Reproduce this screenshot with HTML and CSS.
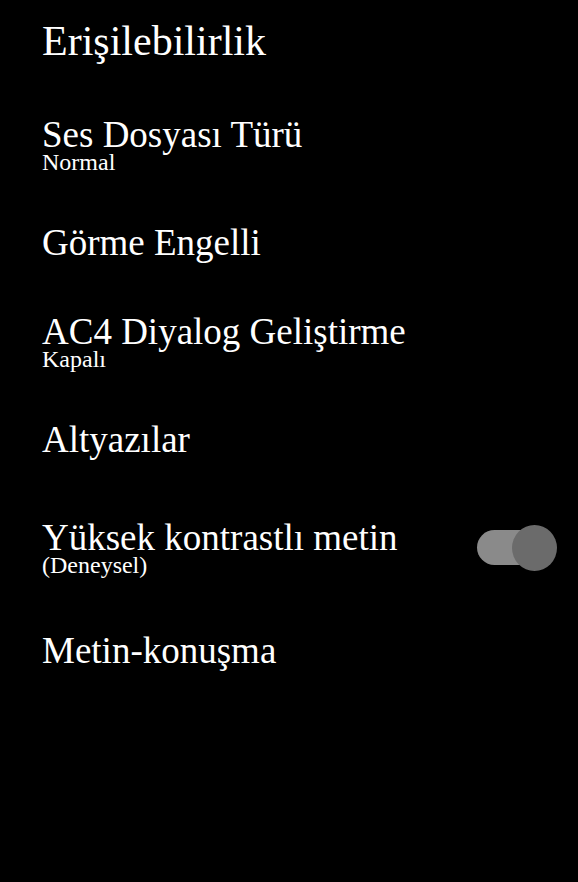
FILE: index.html
```html
<!DOCTYPE html>
<html lang="tr">
<head>
<meta charset="utf-8">
<link rel="stylesheet" href="styles.css">
</head>
<body>
<div class="screen">
  <h1 class="title">Erişilebilirlik</h1>
  <ul class="list">
    <li class="item">
      <div class="text"><div class="name">Ses Dosyası Türü</div><div class="sub">Normal</div></div>
    </li>
    <li class="item">
      <div class="text"><div class="name">Görme Engelli</div></div>
    </li>
    <li class="item">
      <div class="text"><div class="name">AC4 Diyalog Geliştirme</div><div class="sub">Kapalı</div></div>
    </li>
    <li class="item">
      <div class="text"><div class="name">Altyazılar</div></div>
    </li>
    <li class="item item--switch">
      <div class="text"><div class="name">Yüksek kontrastlı metin</div><div class="sub">(Deneysel)</div></div>
      <div class="toggle"><span class="track"></span><span class="knob"></span></div>
    </li>
    <li class="item">
      <div class="text"><div class="name">Metin-konuşma</div></div>
    </li>
  </ul>
</div>
</body>
</html>
```
FILE: styles.css
```css
html, body {
  margin: 0;
  padding: 0;
  background: #000;
}
body {
  font-family: "Liberation Serif", "Times New Roman", serif;
  color: #fff;
  width: 578px;
  height: 882px;
  overflow: hidden;
}
.screen {
  padding: 17px 21px 0 42px;
}
.title {
  margin: 0;
  font-size: 42px;
  font-weight: normal;
  line-height: 48px;
}
.list {
  list-style: none;
  margin: 52px 0 0;
  padding: 0;
  display: flex;
  flex-direction: column;
  gap: 53px;
}
.item {
  display: flex;
  align-items: center;
  justify-content: space-between;
}
.item--switch {
  padding: 9px 0 5px;
}
.name {
  font-size: 37px;
  line-height: 36px;
}
.sub {
  font-size: 24px;
  line-height: 19px;
}
.toggle {
  position: relative;
  width: 80px;
  height: 46px;
  flex: none;
}
.track {
  position: absolute;
  left: 0;
  top: 5px;
  width: 64px;
  height: 35px;
  border-radius: 18px;
  background: #8a8a8a;
}
.knob {
  position: absolute;
  right: 0;
  top: 0;
  width: 45px;
  height: 46px;
  border-radius: 50%;
  background: #6b6b6b;
}
```
